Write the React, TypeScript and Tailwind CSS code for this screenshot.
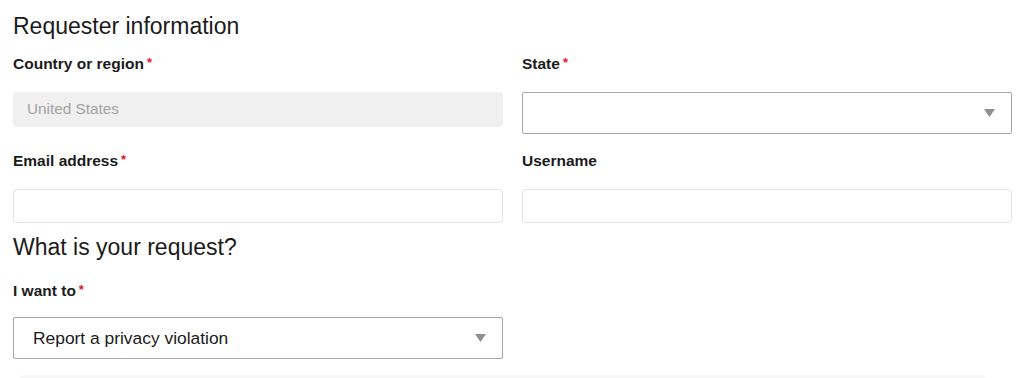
const FONT = { fontFamily: '"Liberation Sans", Arial, sans-serif' };

function Star() {
  return <span className="relative -top-[2px] ml-[3px] text-[13px] leading-none text-[#e3151a]">*</span>;
}

function Label({ text, required }: { text: string; required?: boolean }) {
  return (
    <div className="text-[15.5px] font-bold leading-[20px] text-[#1b1b1b]">
      {text}
      {required && <Star />}
    </div>
  );
}

function Arrow() {
  return (
    <svg width="11" height="8" viewBox="0 0 11 8" className="shrink-0">
      <path d="M0 0 H11 L5.5 8 Z" fill="#8f8f8f" />
    </svg>
  );
}

export default function App() {
  return (
    <div className="h-[378px] overflow-hidden bg-white pl-[13px] pr-[12px]" style={FONT}>
      <h2 className="pt-[12px] text-[23px] leading-[28px] font-normal text-[#1b1b1b]">Requester information</h2>

      <div className="mt-[14px] grid grid-cols-2 gap-x-[19px] items-start">
        <div>
          <Label text="Country or region" required />
          <div className="mt-[18px] flex h-[35px] items-center rounded-[4px] bg-[#f0f0f0] px-[14px] text-[15.3px] text-[#a3a3a3]">
            United States
          </div>
        </div>
        <div>
          <Label text="State" required />
          <div className="mt-[18px] flex h-[42px] items-center justify-end rounded-[2px] border border-[#a6a6a6] bg-white pr-[16px]">
            <Arrow />
          </div>
        </div>
      </div>

      <div className="mt-[17px] grid grid-cols-2 gap-x-[19px]">
        <div>
          <Label text="Email address" required />
          <div className="mt-[18px] h-[34px] rounded-[4px] border-[1.5px] border-[#e3e3e3] bg-white" />
        </div>
        <div>
          <Label text="Username" />
          <div className="mt-[18px] h-[34px] rounded-[4px] border-[1.5px] border-[#e3e3e3] bg-white" />
        </div>
      </div>

      <h2 className="mt-[10px] text-[23px] leading-[28px] font-normal text-[#1b1b1b]">What is your request?</h2>

      <div className="mt-[20px] grid grid-cols-2 gap-x-[19px]">
        <div>
          <Label text="I want to" required />
          <div className="mt-[16px] flex h-[42px] items-center justify-between rounded-[2px] border border-[#a6a6a6] bg-white pl-[19px] pr-[16px] text-[17.4px] text-[#1b1b1b]">
            <span>Report a privacy violation</span>
            <Arrow />
          </div>
        </div>
      </div>

      <div className="mt-[16px] ml-[7px] mr-[27px] h-[40px] rounded-[4px] bg-[#f7f7f7]" />
    </div>
  );
}
